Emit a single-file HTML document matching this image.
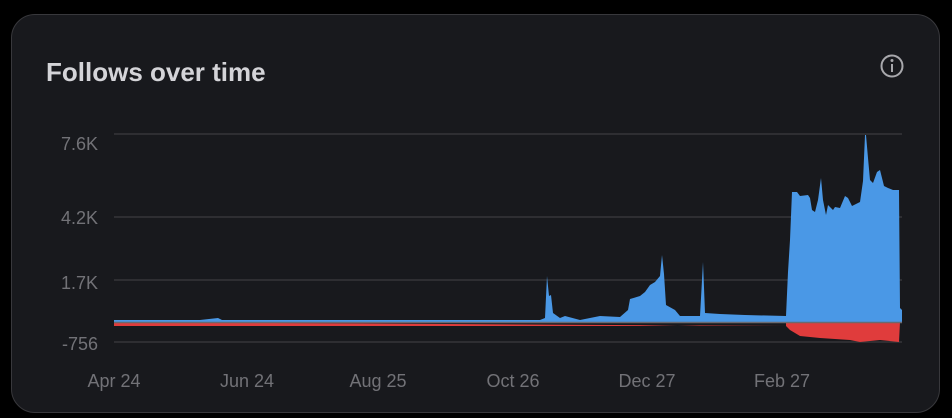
<!DOCTYPE html>
<html><head><style>
body{margin:0;background:#000;width:952px;height:418px;overflow:hidden;font-family:"Liberation Sans",sans-serif}
.card{position:absolute;left:11px;top:14px;width:927px;height:397px;background:#18191d;border:1.5px solid #38383c;border-radius:24px}
</style></head><body>
<div class="card"></div>
<svg width="952" height="418" style="position:absolute;left:0;top:0">
<text x="46" y="81" fill="#d4d4d8" font-size="26" font-weight="bold" font-family="Liberation Sans">Follows over time</text>
<circle cx="892" cy="66" r="10.5" fill="none" stroke="#a8a8ac" stroke-width="2"/>
<circle cx="892" cy="60.5" r="1.5" fill="#a8a8ac"/>
<rect x="891" y="64" width="2" height="8" fill="#a8a8ac"/>
<g stroke="#35363a" stroke-width="1.5">
<line x1="114" y1="134" x2="902" y2="134"/><line x1="114" y1="217" x2="902" y2="217"/>
<line x1="114" y1="280" x2="902" y2="280"/><line x1="114" y1="342" x2="902" y2="342"/>
</g>
<g fill="#727277" font-size="18" text-anchor="end">
<text x="98" y="150">7.6K</text><text x="98" y="224">4.2K</text><text x="98" y="289">1.7K</text><text x="98" y="350">-756</text>
</g>
<g fill="#727277" font-size="18" text-anchor="middle">
<text x="114" y="387">Apr 24</text><text x="247" y="387">Jun 24</text><text x="378" y="387">Aug 25</text><text x="513" y="387">Oct 26</text><text x="647" y="387">Dec 27</text><text x="782" y="387">Feb 27</text>
</g>
<path fill="#e03c3c" d="M114,322 L786,322 L786,326 L790,330 L800,336 L820,338 L850,340 L860,342 L880,340 L899,342 L900,322 Z M114,322 L114,326 L540,326 L600,326 L640,326 L700,325 L786,326 Z"/>
<path fill="#4a98e6" d="M114,322 L114,320 L200,320 L218,318 L222,320 L540,320 L545,318 L547,276 L549,296 L551,295 L553,313 L560,318 L565,316 L580,320 L590,318 L600,316 L620,317 L628,310 L630,299 L640,296 L645,292 L650,285 L655,282 L660,276 L662,255 L664,274 L666,305 L675,310 L680,316 L700,316 L703,262 L705,313 L720,314 L745,315 L786,316 L788,272 L790,240 L792,192 L797,192 L800,196 L808,195 L810,198 L812,210 L815,212 L818,200 L821,178 L823,200 L826,215 L828,205 L833,210 L835,207 L840,208 L845,196 L848,198 L852,206 L860,202 L863,181 L865,135 L866,135 L868,158 L870,180 L873,183 L877,172 L880,170 L884,186 L888,188 L893,190 L899,190 L900,308 L902,310 L902,322 Z"/>
<line x1="114" y1="322.5" x2="902" y2="322.5" stroke="#6a6a70" stroke-width="1.5"/>
</svg>
</body></html>
